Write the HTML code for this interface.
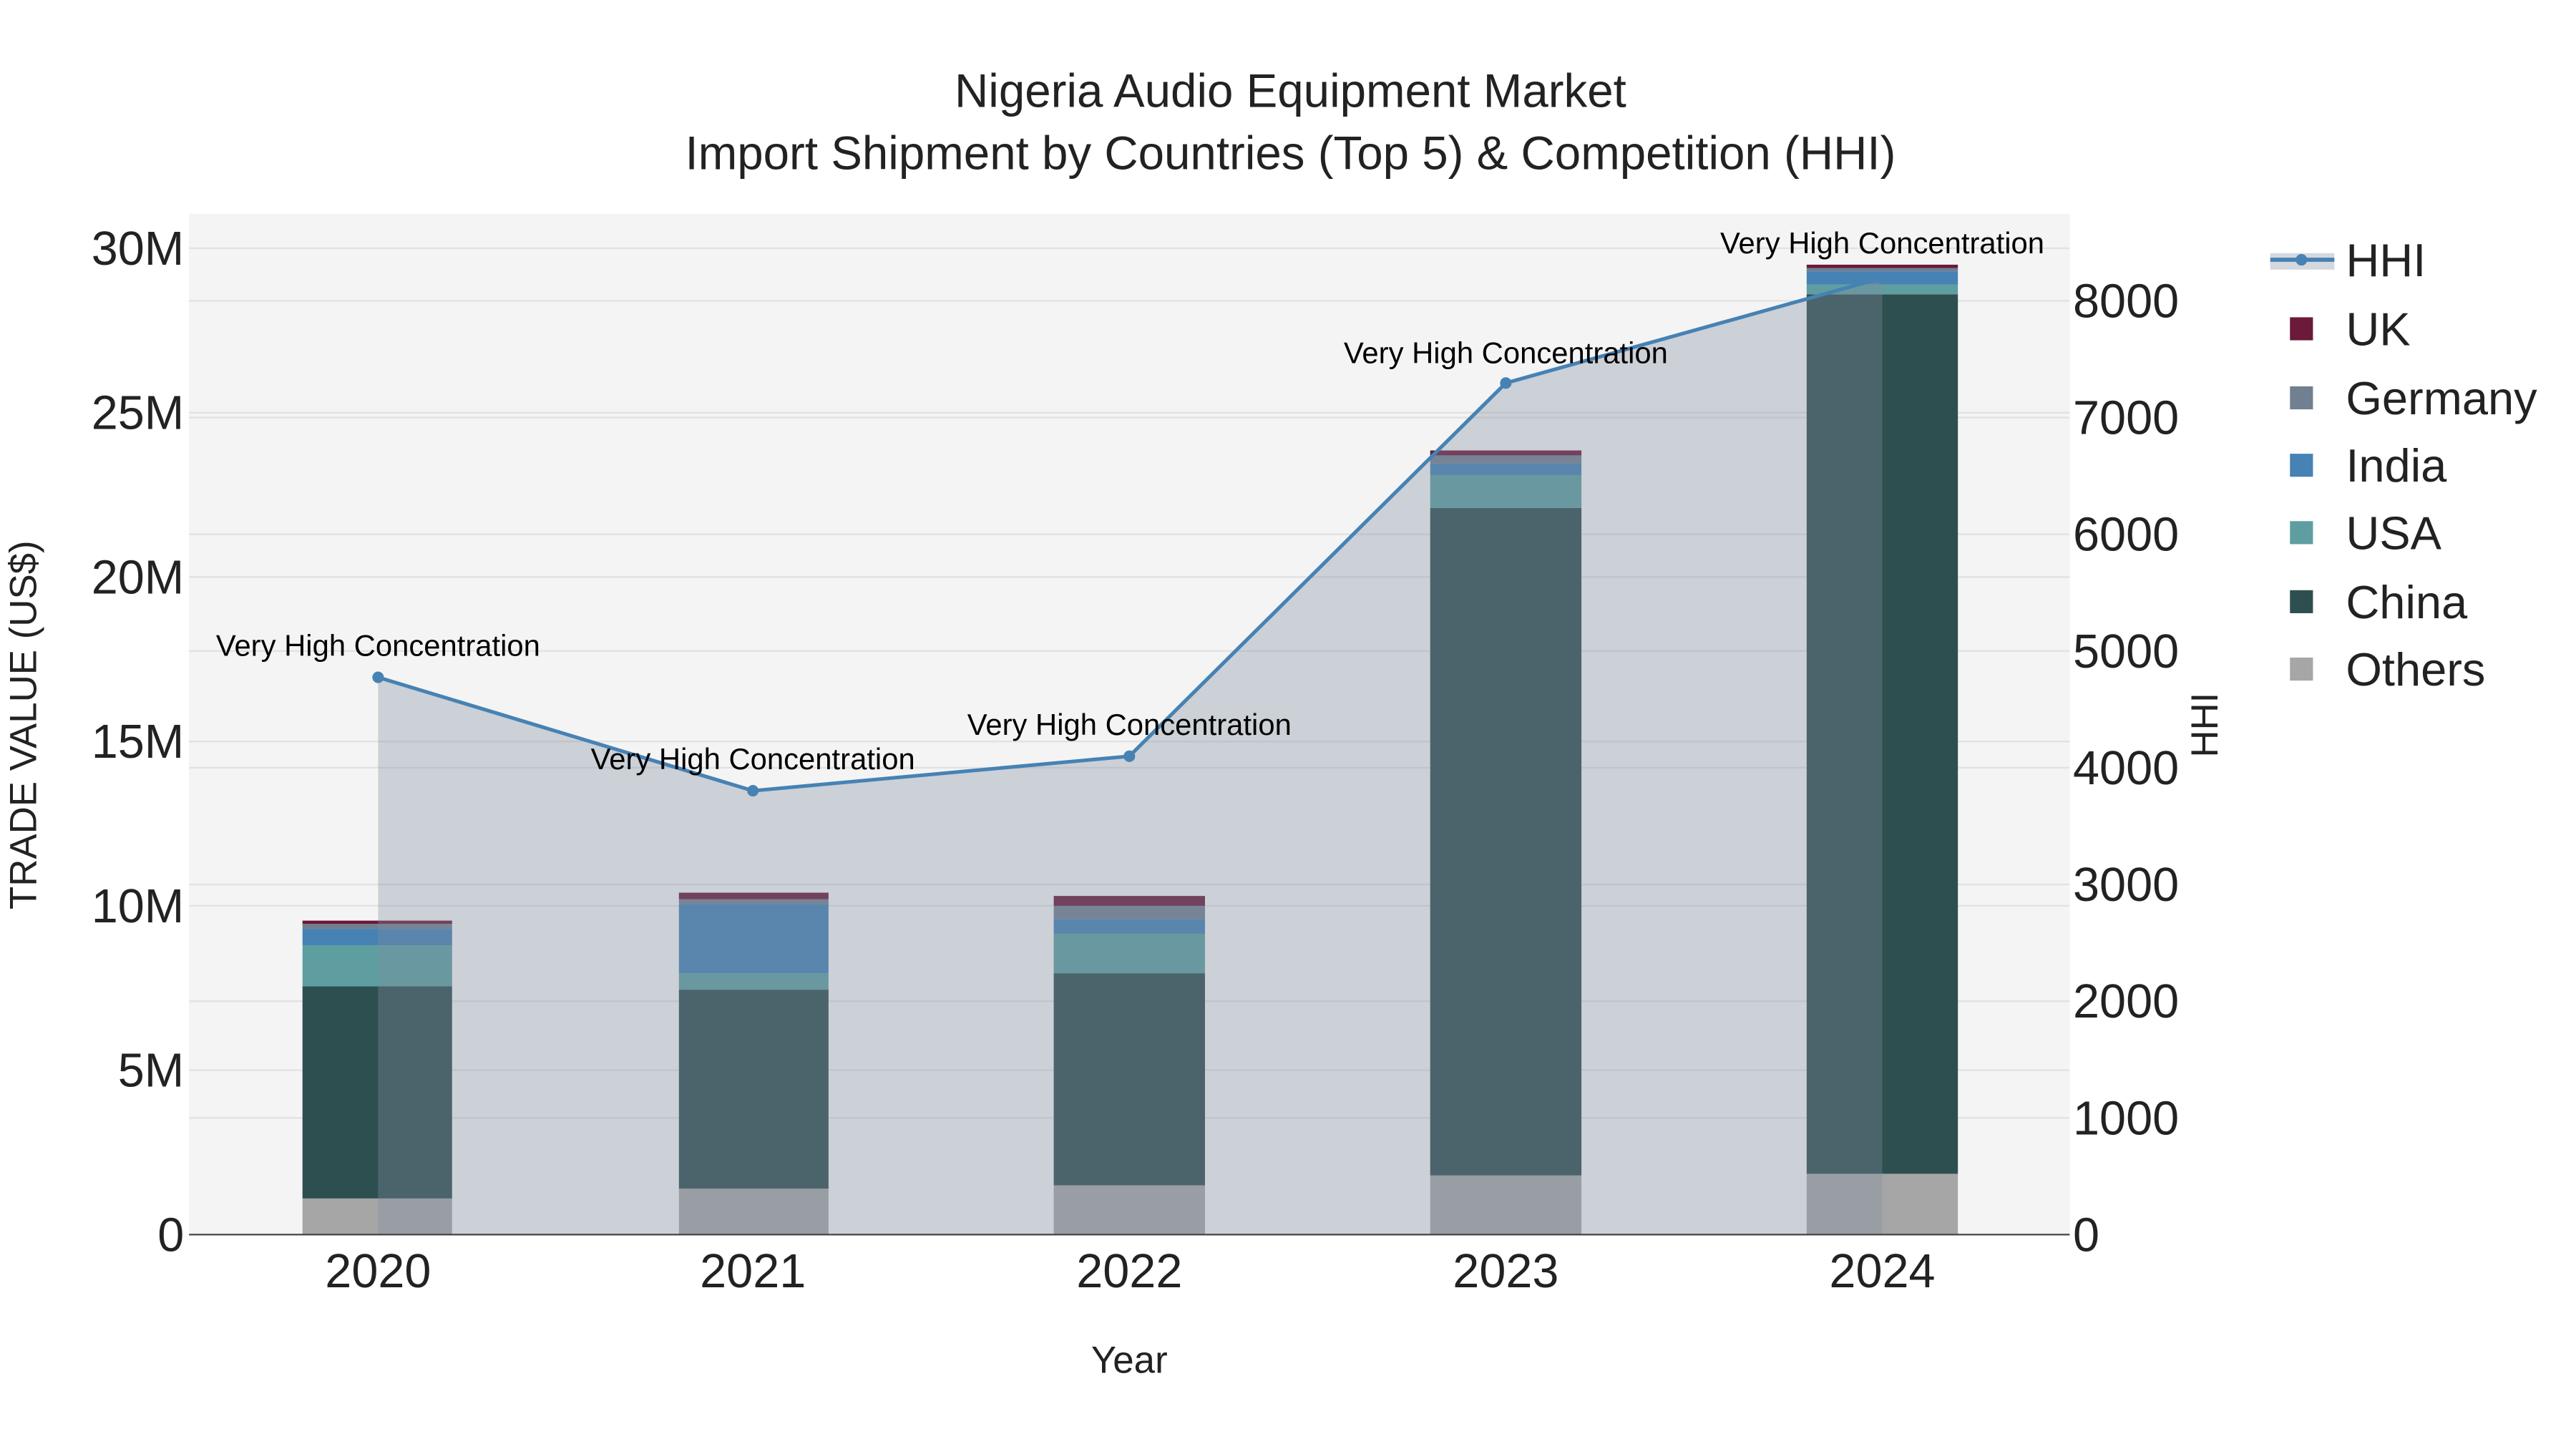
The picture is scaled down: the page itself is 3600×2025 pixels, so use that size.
<!DOCTYPE html>
<html><head><style>html,body{margin:0;padding:0;background:#fff}svg{display:block}</style></head>
<body>
<svg width="3600" height="2025" viewBox="0 0 1567 881.4" preserveAspectRatio="none" xmlns="http://www.w3.org/2000/svg" font-family="Liberation Sans, sans-serif">
<rect x="0" y="0" width="1567" height="881.4" fill="#fff"/>
<rect x="115" y="130" width="1144" height="621" fill="#f4f4f4"/>
<g stroke="#e2e2e2" stroke-width="1">
<line x1="115" x2="1259" y1="651" y2="651"/><line x1="115" x2="1259" y1="551" y2="551"/><line x1="115" x2="1259" y1="451" y2="451"/><line x1="115" x2="1259" y1="351" y2="351"/><line x1="115" x2="1259" y1="251" y2="251"/><line x1="115" x2="1259" y1="151" y2="151"/>
<line x1="115" x2="1259" y1="680" y2="680"/><line x1="115" x2="1259" y1="609" y2="609"/><line x1="115" x2="1259" y1="538" y2="538"/><line x1="115" x2="1259" y1="467" y2="467"/><line x1="115" x2="1259" y1="396" y2="396"/><line x1="115" x2="1259" y1="325" y2="325"/><line x1="115" x2="1259" y1="254" y2="254"/><line x1="115" x2="1259" y1="183" y2="183"/>
</g>
<g>
<rect x="184" y="729" width="91" height="22" fill="#a6a6a6"/><rect x="184" y="600" width="91" height="129" fill="#2e4f4f"/><rect x="184" y="575" width="91" height="25" fill="#5f9ea0"/><rect x="184" y="565" width="91" height="10" fill="#4682b4"/><rect x="184" y="562" width="91" height="3" fill="#708090"/><rect x="184" y="560" width="91" height="2" fill="#6b1a3a"/>
<rect x="413" y="723" width="91" height="28" fill="#a6a6a6"/><rect x="413" y="602" width="91" height="121" fill="#2e4f4f"/><rect x="413" y="592" width="91" height="10" fill="#5f9ea0"/><rect x="413" y="550" width="91" height="42" fill="#4682b4"/><rect x="413" y="547" width="91" height="3" fill="#708090"/><rect x="413" y="543" width="91" height="4" fill="#6b1a3a"/>
<rect x="641" y="721" width="92" height="30" fill="#a6a6a6"/><rect x="641" y="592" width="92" height="129" fill="#2e4f4f"/><rect x="641" y="568" width="92" height="24" fill="#5f9ea0"/><rect x="641" y="559" width="92" height="9" fill="#4682b4"/><rect x="641" y="551" width="92" height="8" fill="#708090"/><rect x="641" y="545" width="92" height="6" fill="#6b1a3a"/>
<rect x="870" y="715" width="92" height="36" fill="#a6a6a6"/><rect x="870" y="309" width="92" height="406" fill="#2e4f4f"/><rect x="870" y="289" width="92" height="20" fill="#5f9ea0"/><rect x="870" y="282" width="92" height="7" fill="#4682b4"/><rect x="870" y="277" width="92" height="5" fill="#708090"/><rect x="870" y="274" width="92" height="3" fill="#6b1a3a"/>
<rect x="1099" y="714" width="92" height="37" fill="#a6a6a6"/><rect x="1099" y="179" width="92" height="535" fill="#2e4f4f"/><rect x="1099" y="173" width="92" height="6" fill="#5f9ea0"/><rect x="1099" y="165" width="92" height="8" fill="#4682b4"/><rect x="1099" y="163" width="92" height="2" fill="#708090"/><rect x="1099" y="161" width="92" height="2" fill="#6b1a3a"/>
</g>
<polygon points="230,751 230,412 458,481 687,460 916,233 1145,169 1145,751" fill="rgb(130,140,160)" fill-opacity="0.35"/>
<polyline points="230,412 458,481 687,460 916,233 1145,169" fill="none" stroke="#4682b4" stroke-width="2.2"/>
<g fill="#4682b4"><circle cx="230" cy="412" r="3.5"/><circle cx="458" cy="481" r="3.5"/><circle cx="687" cy="460" r="3.5"/><circle cx="916" cy="233" r="3.5"/><circle cx="1145" cy="169" r="3.5"/></g>
<line x1="115" x2="1259" y1="751" y2="751" stroke="#444" stroke-width="1"/>
<g font-size="18.2" text-anchor="middle" fill="#000">
<text x="230" y="399">Very High Concentration</text><text x="458" y="468">Very High Concentration</text><text x="687" y="447">Very High Concentration</text><text x="916" y="221">Very High Concentration</text><text x="1145" y="154">Very High Concentration</text>
</g>
<g font-size="28.5" fill="#222" text-anchor="middle">
<text x="785" y="65">Nigeria Audio Equipment Market</text>
<text x="785" y="103">Import Shipment by Countries (Top 5) &amp; Competition (HHI)</text>
</g>
<g font-size="29" fill="#222" text-anchor="end">
<text x="112" y="761">0</text><text x="112" y="661">5M</text><text x="112" y="561">10M</text><text x="112" y="461">15M</text><text x="112" y="361">20M</text><text x="112" y="261">25M</text><text x="112" y="161">30M</text>
</g>
<g font-size="29" fill="#222" text-anchor="start">
<text x="1261" y="761">0</text><text x="1261" y="690">1000</text><text x="1261" y="619">2000</text><text x="1261" y="548">3000</text><text x="1261" y="477">4000</text><text x="1261" y="406">5000</text><text x="1261" y="335">6000</text><text x="1261" y="264">7000</text><text x="1261" y="193">8000</text>
</g>
<g font-size="29" fill="#222" text-anchor="middle">
<text x="230" y="783">2020</text><text x="458" y="783">2021</text><text x="687" y="783">2022</text><text x="916" y="783">2023</text><text x="1145" y="783">2024</text>
</g>
<text x="687" y="835" font-size="23" fill="#222" text-anchor="middle">Year</text>
<text transform="translate(22,441) rotate(-90)" font-size="23" fill="#222" text-anchor="middle">TRADE VALUE (US$)</text>
<text transform="translate(1349,441) rotate(-90)" font-size="23" fill="#222" text-anchor="middle">HHI</text>
<rect x="1381" y="154" width="39" height="10" fill="rgb(130,140,160)" fill-opacity="0.35"/>
<line x1="1381" x2="1420" y1="158" y2="158" stroke="#4682b4" stroke-width="2.5"/>
<circle cx="1400" cy="158" r="3.5" fill="#4682b4"/>
<rect x="1393" y="193" width="14" height="14" fill="#6b1a3a"/>
<rect x="1393" y="235" width="14" height="14" fill="#708090"/>
<rect x="1393" y="276" width="14" height="14" fill="#4682b4"/>
<rect x="1393" y="317" width="14" height="14" fill="#5f9ea0"/>
<rect x="1393" y="359" width="14" height="14" fill="#2e4f4f"/>
<rect x="1393" y="400" width="14" height="14" fill="#a6a6a6"/>
<g font-size="28.3" fill="#222">
<text x="1427" y="168">HHI</text><text x="1427" y="210">UK</text><text x="1427" y="252">Germany</text><text x="1427" y="293">India</text><text x="1427" y="334">USA</text><text x="1427" y="376">China</text><text x="1427" y="417">Others</text>
</g>
</svg>
</body></html>
